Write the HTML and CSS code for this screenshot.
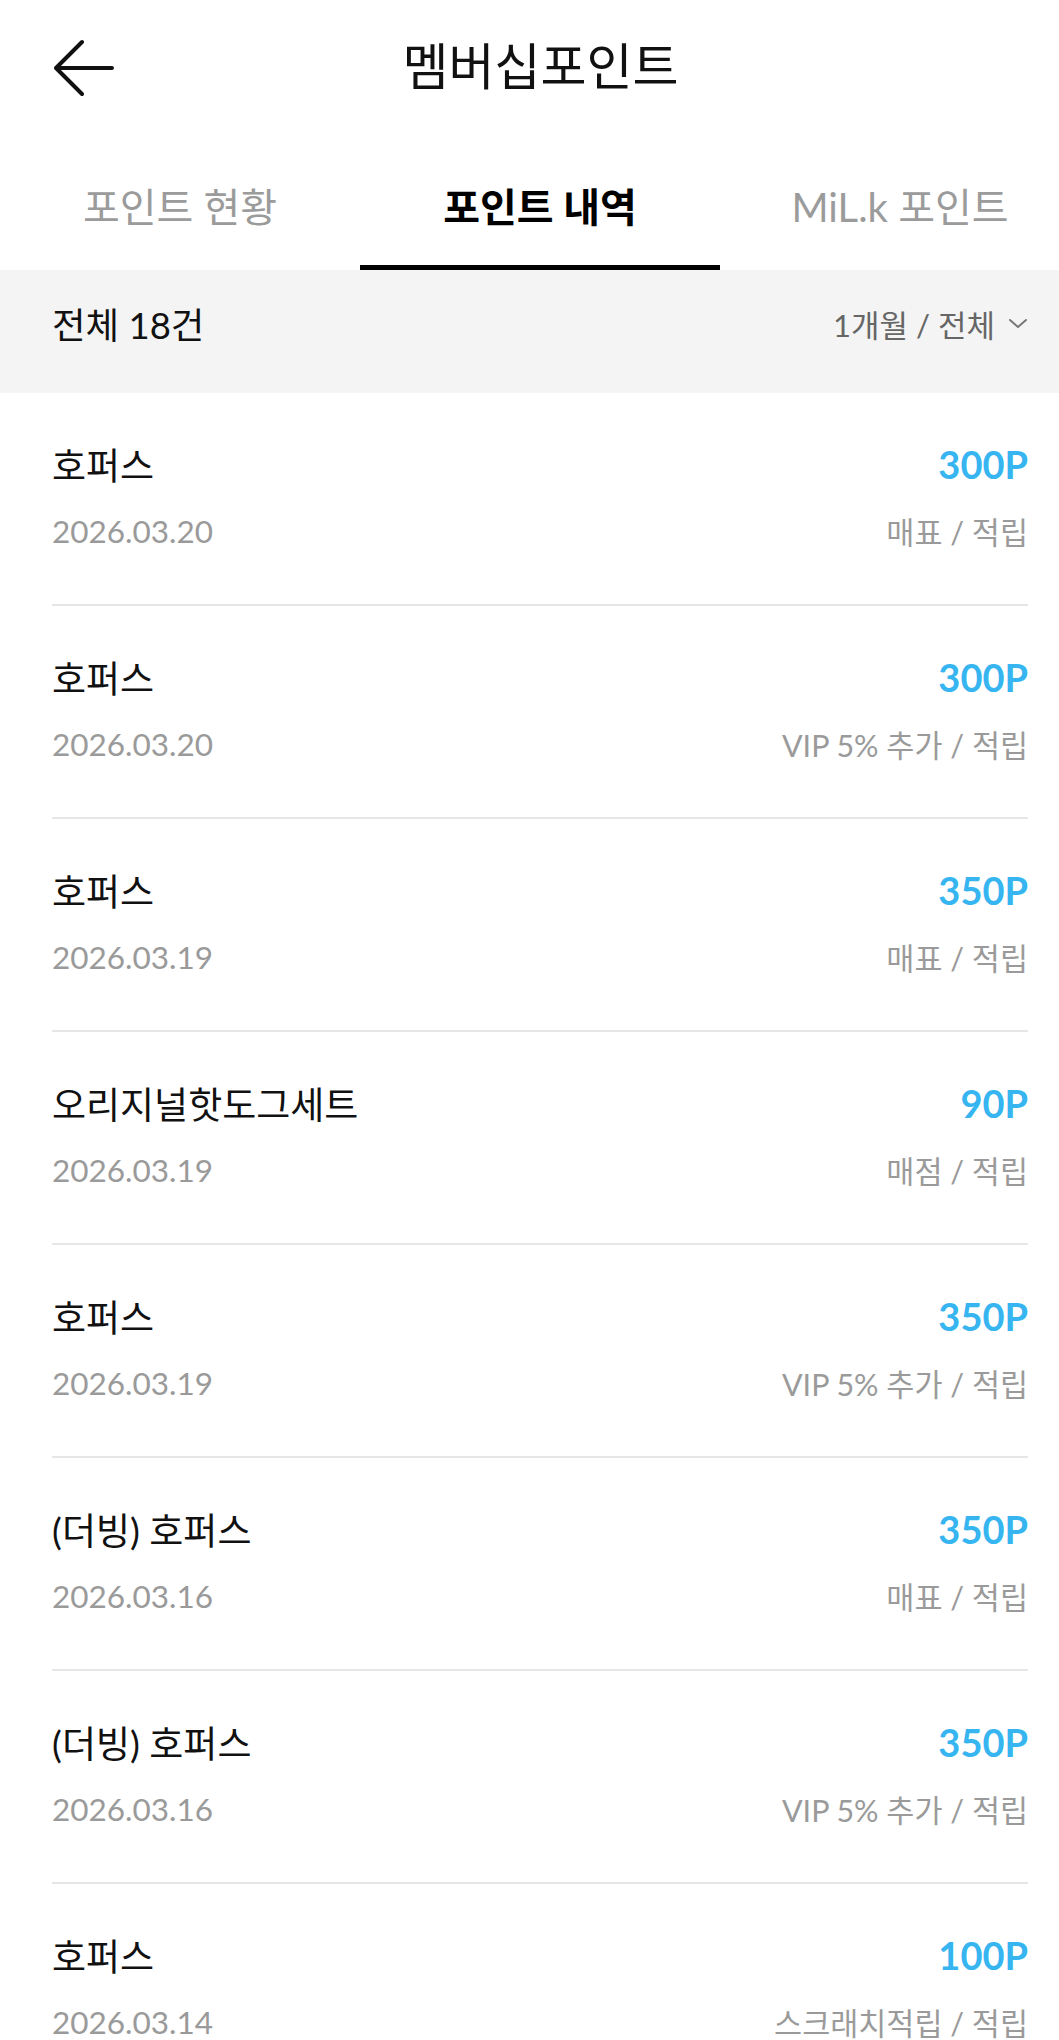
FILE: index.html
```html
<!DOCTYPE html>
<html lang="ko">
<head>
    <meta charset="UTF-8">
    <meta name="viewport" content="width=device-width, initial-scale=1.0">
    <title>멤버십포인트</title>
    <link rel="stylesheet" href="styles.css">
</head>
<body>

    <!-- Header -->
    <div class="header">
        <div class="back">
            <svg width="60" height="58" viewBox="0 0 60 58" fill="none" stroke="#111" stroke-width="4" stroke-linecap="round" stroke-linejoin="round">
                <path d="M28 3 L2 29 L28 55 M2 29 H58"/>
            </svg>
        </div>
        <h1 class="title">멤버십포인트</h1>
        <div></div>
    </div>

    <!-- Tabs -->
    <div class="tabs">
        <div class="tab">포인트 현황</div>
        <div class="tab active">포인트 내역</div>
        <div class="tab">MiL.k 포인트</div>
    </div>

    <!-- Filter -->
    <div class="filter">
        <span class="total">전체 18건</span>
        <span class="period">1개월 / 전체
            <svg width="20" height="11" viewBox="0 0 20 11" fill="none" stroke="#777" stroke-width="2" stroke-linecap="round" stroke-linejoin="round">
                <path d="M2 2 L10 9 L18 2"/>
            </svg>
        </span>
    </div>

    <!-- History list -->
    <ul class="history">
        <li class="item">
            <div class="line"><span class="name">호퍼스</span><span class="point">300P</span></div>
            <div class="line sub"><span class="date">2026.03.20</span><span class="desc">매표 / 적립</span></div>
        </li>
        <li class="item">
            <div class="line"><span class="name">호퍼스</span><span class="point">300P</span></div>
            <div class="line sub"><span class="date">2026.03.20</span><span class="desc">VIP 5% 추가 / 적립</span></div>
        </li>
        <li class="item">
            <div class="line"><span class="name">호퍼스</span><span class="point">350P</span></div>
            <div class="line sub"><span class="date">2026.03.19</span><span class="desc">매표 / 적립</span></div>
        </li>
        <li class="item">
            <div class="line"><span class="name">오리지널핫도그세트</span><span class="point">90P</span></div>
            <div class="line sub"><span class="date">2026.03.19</span><span class="desc">매점 / 적립</span></div>
        </li>
        <li class="item">
            <div class="line"><span class="name">호퍼스</span><span class="point">350P</span></div>
            <div class="line sub"><span class="date">2026.03.19</span><span class="desc">VIP 5% 추가 / 적립</span></div>
        </li>
        <li class="item">
            <div class="line"><span class="name">(더빙) 호퍼스</span><span class="point">350P</span></div>
            <div class="line sub"><span class="date">2026.03.16</span><span class="desc">매표 / 적립</span></div>
        </li>
        <li class="item">
            <div class="line"><span class="name">(더빙) 호퍼스</span><span class="point">350P</span></div>
            <div class="line sub"><span class="date">2026.03.16</span><span class="desc">VIP 5% 추가 / 적립</span></div>
        </li>
        <li class="item">
            <div class="line"><span class="name">호퍼스</span><span class="point">100P</span></div>
            <div class="line sub"><span class="date">2026.03.14</span><span class="desc">스크래치적립 / 적립</span></div>
        </li>
    </ul>

</body>
</html>
```

FILE: styles.css
```css
body { margin: 0; font-family: Lato, "Noto Sans CJK KR", sans-serif; color: #111; background: #fff; overflow-x: hidden; }

.header { display: grid; grid-template-columns: 120px 1fr 98px; align-items: center; height: 136px; }
.back { padding-left: 54px; display: flex; align-items: center; }
.back svg { display: block; }
.title { margin: 0 0 4px; text-align: center; font-size: 50px; font-weight: 400; line-height: 60px; }

.tabs { display: flex; overflow: hidden; }
.tab { flex: 0 0 360px; text-align: center; font-size: 40px; line-height: 50px; color: #9b9b9b; padding: 46px 0 33px; border-bottom: 5px solid transparent; }
.tab.active { color: #000; font-weight: 700; border-bottom-color: #000; }

.filter { display: flex; justify-content: space-between; align-items: center; height: 123px; box-sizing: border-box; padding: 0 31px 16px 52px; background-color: #f4f4f4; }
.total { font-size: 36.5px; color: #111; }
.period { font-size: 31px; color: #666; display: flex; align-items: center; gap: 13px; }

.history { list-style: none; margin: 0; padding: 0 31px 0 52px; }
.item { padding: 47px 0 53px; border-bottom: 2px solid #e6e6e6; }
.line { display: flex; justify-content: space-between; align-items: center; height: 48px; }
.name { font-size: 37px; color: #111; }
.point { font-size: 38px; font-weight: 700; color: #36b5f1; }
.line.sub { height: 40px; margin-top: 23px; color: #9a9a9a; }
.date { font-size: 31.5px; }
.desc { font-size: 30.5px; }
```
